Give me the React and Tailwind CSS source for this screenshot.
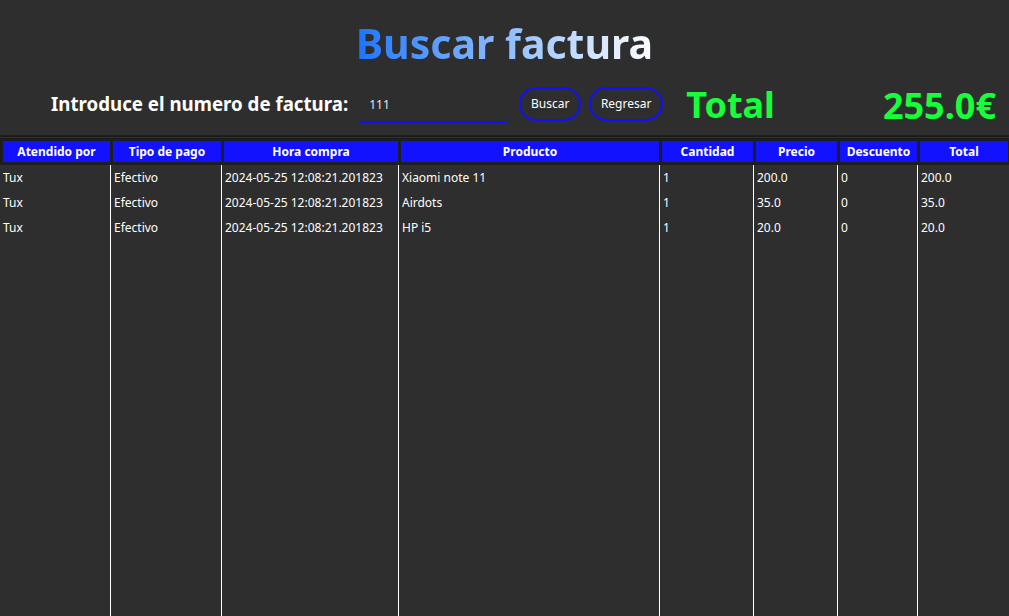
import React from "react";

const cols = [
  { name: "Atendido por", w: "w-[111px]" },
  { name: "Tipo de pago", w: "w-[111px]" },
  { name: "Hora compra", w: "w-[177px]" },
  { name: "Producto", w: "w-[261px]" },
  { name: "Cantidad", w: "w-[94px]" },
  { name: "Precio", w: "w-[84px]" },
  { name: "Descuento", w: "w-[80px]" },
  { name: "Total", w: "flex-1" },
];

const rows = [
  ["Tux", "Efectivo", "2024-05-25 12:08:21.201823", "Xiaomi note 11", "1", "200.0", "0", "200.0"],
  ["Tux", "Efectivo", "2024-05-25 12:08:21.201823", "Airdots", "1", "35.0", "0", "35.0"],
  ["Tux", "Efectivo", "2024-05-25 12:08:21.201823", "HP i5", "1", "20.0", "0", "20.0"],
];

export default function App() {
  return (
    <div
      className="w-[1009px] h-[616px] overflow-hidden bg-[#2e2e2e] flex flex-col text-white"
      style={{ fontFamily: '"Noto Sans", "Open Sans", sans-serif' }}
    >
      <div className="h-[76px] flex items-center justify-center pt-[10px]">
        <h1 className="text-[41px] font-bold leading-none bg-gradient-to-r from-[#1674ff] via-[#8dbcff] to-[#ffffff] bg-clip-text text-transparent">
          Buscar factura
        </h1>
      </div>
      <div className="h-[59px] flex items-center pb-[3px]">
        <div className="ml-[51px] text-[18.7px] font-bold leading-none">Introduce el numero de factura:</div>
        <div className="ml-[11px] w-[149px] h-[34px] border-b-2 border-[#1010ff] flex items-center pl-[10px] text-[12px] text-[#e8e8e8] mt-[4px]">
          111
        </div>
        <button className="ml-[11px] w-[62px] h-[34px] rounded-full border-2 border-[#1010ff] text-[12px] text-white">
          Buscar
        </button>
        <button className="ml-[8px] w-[74px] h-[34px] rounded-full border-2 border-[#1010ff] text-[12px] text-white">
          Regresar
        </button>
        <div className="ml-[23px] text-[36px] font-bold leading-none text-[#16ff3a] mt-[2px]">Total</div>
        <div className="ml-auto mr-[13px] text-[36px] font-bold leading-none text-[#16ff3a] mt-[4px]">255.0€</div>
      </div>
      <div className="h-[2px] bg-[#1c1c1c]" />
      <div className="flex-1 flex flex-col">
        <div className="flex h-[27px] bg-[#1e1e1e] pt-[3px] pb-[3px] mt-[1px]">
          {cols.map((c, i) => (
            <div key={i} className={`${c.w} shrink-0 flex ${i === 0 ? "pl-[3px]" : "pl-[2px]"} pr-[1px]`}>
              <div className="flex-1 bg-[#1212ff] flex items-center justify-center text-[12px] font-bold leading-none">
                {c.name}
              </div>
            </div>
          ))}
        </div>
        <div className="flex-1 flex">
          {cols.map((c, i) => (
            <div
              key={i}
              className={`${c.w} shrink-0 flex flex-col ${i < cols.length - 1 ? "border-r border-white" : ""} pl-[3px]`}
            >
              {rows.map((r, j) => (
                <div key={j} className="h-[25px] flex items-center text-[12px] leading-none whitespace-nowrap">
                  {r[i]}
                </div>
              ))}
            </div>
          ))}
        </div>
      </div>
    </div>
  );
}
